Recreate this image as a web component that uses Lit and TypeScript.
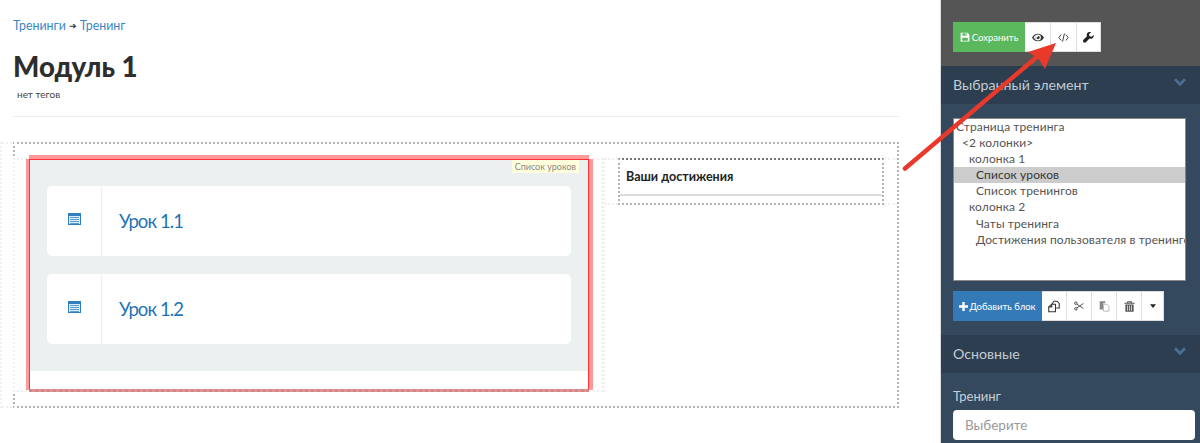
import { LitElement, html, css, svg } from "lit";
import { customElement } from "lit/decorators.js";

const ic = (w: number, h: number, body: unknown, vb = "0 0 16 16") =>
  html`<svg width=${w} height=${h} viewBox=${vb} aria-hidden="true">${body}</svg>`;

const icons = {
  save: ic(10, 10, svg`<path fill="#fff" fill-rule="evenodd" d="M1 1h11l3 3v11H1zM4 2v4h7V2zM8.500 2.800h1.500v2.400H8.500zM3.500 9v5h9V9z"/>`),
  eye: ic(12, 9, svg`<path fill="#333" fill-rule="evenodd" d="M0 5C3 -1 11 -1 14 5 11 11 3 11 0 5zM7 1.600A3.400 3.400 0 1 0 7 8.400 3.400 3.400 0 0 0 7 1.600zM1.800 5C3 6.800 4 7.600 4.800 8 3.400 6.200 3.400 3.800 4.800 2 4 2.400 3 3.200 1.800 5zM7 3a2 2 0 1 1-2 2c.8.500 2.200-.6 2-2z"/>`, "0 0 14 10"),
  code: ic(11, 9, svg`<path fill="none" stroke="#444" stroke-width="1" d="M3.200 1.500 .8 4.500l2.400 3M7.800 1.500l2.400 3-2.400 3M6.400 .5 4.600 8.500"/>`, "0 0 11 9"),
  wrench: ic(11, 11, svg`<path fill="#222" d="M15.500 4.200 12.700 7 9.500 6.200 8.800 3.300 11.700.5C9.300-.4 6.900.4 5.900 2.300 5.200 3.600 5.300 5 5.800 6.200L.7 11.300c-.9.900-.9 2.500 0 3.500.9.900 2.500.9 3.500 0l5.200-5.200c1.200.5 2.600.5 3.800-.1 2-1 2.900-3.400 2.300-5.300z"/>`),
  clone: ic(12, 13, svg`<g fill="none" stroke="#333" stroke-width="1.400"><path d="M5 5 8 1h4l3 3v6h-4"/><path d="M1 8.500 5 5h5v10H1z" fill="#fff"/><path d="M5 5v3.500H1"/></g>`),
  scissors: ic(12, 10, svg`<g fill="none" stroke="#555" stroke-width="1.600"><circle cx="3" cy="3.500" r="2"/><circle cx="3" cy="12.500" r="2"/><path d="M4.500 5 15 12M4.500 11 15 4"/></g>`),
  paste: ic(11, 12, svg`<path fill="#888" d="M1 1h8v3H6v9H1z"/><path fill="#fff" stroke="#aaa" stroke-width="1.200" d="M6.500 5.500h5l3 3v7h-8z"/>`),
  trash: ic(11, 13, svg`<path fill="#555" fill-rule="evenodd" d="M5 .5h6l1 2h3.500v1.500H.5V2.500H4zM6 2.500h4L9.700 1.700H6.300zM2 5h12v10.500H2zM4.500 6.500v7.500h1V6.500zM7.500 6.500v7.500h1V6.500zM10.500 6.500v7.500h1V6.500z"/>`),
  caret: ic(6, 4, svg`<path fill="#222" d="M0 0h8L4 5z"/>`, "0 0 8 5"),
  plus: ic(9, 9, svg`<path fill="#fff" d="M3.300 0h2.400v3.300H9v2.400H5.700V9H3.300V5.700H0V3.300h3.300z"/>`, "0 0 9 9"),
  chevron: ic(12, 8, svg`<path fill="none" stroke="#4a6d94" stroke-width="3" d="M1 1.200l5 5 5-5"/>`, "0 0 12 8"),
  list: ic(13, 12, svg`<rect x=".5" y=".5" width="12" height="11" fill="#dcebf7" stroke="#2f7fc0"/><path fill="#2f7fc0" d="M1 1h11v2H1z"/><path stroke="#5d9ed2" d="M2 4.500h9M2 6.500h9M2 8.500h9M2 10.500h9"/>`, "0 0 13 12"),
};

@customElement("app-root")
export class AppRoot extends LitElement {
  static styles = css`
    :host { display: flex; width: 1200px; height: 443px; overflow: hidden; position: relative; background: #fff;
      font-family: Lato, "Noto Sans", sans-serif; color: #333; }
    a { color: #3a87c2; text-decoration: none; }
    .main { width: 940px; flex: none; padding: 18px 41px 0 13px; box-sizing: border-box; }
    .crumbs { font-size: 12.400px; line-height: 16px; display: flex; align-items: center; gap: 3px; }
    .sep { font-size: 9px; }
    h1 { margin: 16px 0 0; font-size: 27.700px; line-height: 34px; font-weight: 900; color: #2e2e2e; }
    .tags { font-size: 10px; line-height: 12px; margin: 4px 0 0 4px; color: #444; }
    .rule { height: 1px; background: #eee; margin-top: 16px; }
    .canvas { margin-top: 25px; height: 266px; box-sizing: border-box; border: 2px dotted #b4b4b4; }
    .columns { display: flex; height: 266px; margin: -2px 0 0 -15px; }
    .col1 { width: 603px; flex: none; box-sizing: border-box; border-left: 2px dotted #f0f0f0; padding-left: 11px;
      background:
        repeating-linear-gradient(90deg, #f0f0f0 0 2px, transparent 2px 4px) 0 0 / 13px 2px no-repeat,
        repeating-linear-gradient(90deg, #f0f0f0 0 2px, transparent 2px 4px) 0 100% / 13px 2px no-repeat; }
    .col1-inner { margin-top: 16px; height: 234px; border: 2px dotted #f0f0f0; padding-left: 14px; box-sizing: border-box; }
    .col2 { flex: 1; padding-top: 16px; }
    .col2-inner { height: 234px; border-left: 2px dotted #f0f0f0; box-sizing: border-box; }
    .ach-wrap { height: 47px; box-sizing: border-box; border: 2px dotted #f0f0f0; border-width: 2px 0; padding-left: 13px; }
    .lessons { width: 560px; height: 231px; box-sizing: border-box; position: relative; margin-top: -1px;
      border: 1px solid #f33; box-shadow: -3px 0 0 #ff9999, 4px 0 0 #ff9999, 0 -4px 0 #ff9999; background: #fff; }
    .lessons::after { content: ""; position: absolute; left: -1px; right: -1px; top: 100%; height: 3px;
      background: repeating-linear-gradient(90deg, #c98a8a 0 3px, #e59090 3px 6px); }
    .lessons-bg { background: #ecf0f1; height: 211px; padding: 26px 17px 0 17px; box-sizing: border-box; display: flex; flex-direction: column; gap: 18px; }
    .tag { position: absolute; top: 0; right: 9px; background: #ffffdd; color: #888; font-size: 9px; line-height: 13px; padding: 0 3px; }
    .card { height: 70px; background: #fff; border-radius: 5px; display: flex; align-items: stretch; flex: none; }
    .card-icon { width: 55px; flex: none; border-right: 1px solid #eef1f2; display: flex; align-items: center; justify-content: center; padding: 0 0 5px 1px; box-sizing: border-box; }
    .card-title { display: flex; align-items: center; padding-left: 17px; font-size: 18.500px; letter-spacing: -0.9px; color: #1f73b4; }
    .ach { width: 266px; height: 47px; margin-top: -2px; box-sizing: border-box; border: 2px dotted #b4b4b4; border-top-color: #777; background: #fff; }
    .ach-title { height: 34px; border-bottom: 2px solid #ddd; padding-left: 6px; font-size: 12.500px; font-weight: 700; line-height: 34px; color: #222; }
    .side { width: 260px; flex: none; background: #34495e; border-left: 1px solid #ddd; box-sizing: border-box; color: #cfd6dc; }
    .top { height: 66px; background: #555; padding: 22px 0 0 12px; box-sizing: border-box; }
    .group { display: flex; height: 30px; }
    .btn { background: #fff; border: 1px solid #ddd; border-left-width: 0; display: flex; align-items: center; justify-content: center; box-sizing: border-box; height: 30px; }
    .btn.w26 { width: 26px; } .btn.w24 { width: 24px; } .btn.w25 { width: 25px; } .btn.w22 { width: 22px; }
    .primary { color: #fff; font-size: 9.500px; gap: 2px; border: 0; }
    .blue { background: #337ab7; width: 89px; gap: 1px; }
    .green { background: #5cb85c; width: 72px; }
    .head { height: 38px; background: #2c3e50; display: flex; align-items: center; justify-content: space-between; padding: 0 14px 2px 12px; box-sizing: border-box; font-size: 14.200px; color: #c3ccd3; }
    .head svg { margin-top: -4px; }
    .tree { margin: 14px 0 0 12px; width: 233px; height: 163px; background: #fff; border: 1px solid #888; box-sizing: border-box; overflow: hidden; color: #555; font-size: 12px; letter-spacing: 0.1px; }
    .row { height: 16.100px; line-height: 15px; white-space: nowrap; overflow: hidden; }
    .row.sel { background: #ccc; color: #333; }
    .i0 { padding-left: 2px; } .i1 { padding-left: 8px; } .i2 { padding-left: 15px; } .i3 { padding-left: 22px; }
    .tools { margin: 10px 0 0 12px; }
    .second { margin-top: 14px; }
    .field { padding: 15px 0 0 12px; }
    .label { font-size: 13px; line-height: 16px; color: #c8d0d6; }
    .input { margin-top: 6px; width: 242px; height: 30px; background: #fff; border-radius: 4px; padding: 0 12px; box-sizing: border-box; color: #999; font-size: 13.500px; line-height: 30px; }
    .arrow { position: absolute; left: 0; top: 0; pointer-events: none; }
  `;

  render() {
    const tree: [string, number, boolean?][] = [
      ["Страница тренинга", 0], ["<2 колонки>", 1], ["колонка 1", 2], ["Список уроков", 3, true],
      ["Список тренингов", 3], ["колонка 2", 2], ["Чаты тренинга", 3], ["Достижения пользователя в тренинге", 3],
    ];
    return html`
      <div class="main">
        <div class="crumbs"><a href="#">Тренинги</a><span class="sep">➔</span><a href="#">Тренинг</a></div>
        <h1>Модуль 1</h1>
        <div class="tags">нет тегов</div>
        <div class="rule"></div>
        <div class="canvas">
          <div class="columns">
            <div class="col1">
              <div class="col1-inner">
                <div class="lessons">
                  <div class="lessons-bg">
                    ${["Урок 1.1", "Урок 1.2"].map((t) => html`
                      <div class="card"><div class="card-icon">${icons.list}</div><a class="card-title" href="#">${t}</a></div>`)}
                  </div>
                  <div class="tag">Список уроков</div>
                </div>
              </div>
            </div>
            <div class="col2">
              <div class="col2-inner">
                <div class="ach-wrap"><div class="ach"><div class="ach-title">Ваши достижения</div></div></div>
              </div>
            </div>
          </div>
        </div>
      </div>
      <div class="side">
        <div class="top">
          <div class="group">
            <div class="btn primary green">${icons.save}<span>Сохранить</span></div>
            <div class="btn w26">${icons.eye}</div>
            <div class="btn w26">${icons.code}</div>
            <div class="btn w24">${icons.wrench}</div>
          </div>
        </div>
        <div class="head"><span>Выбранный элемент</span>${icons.chevron}</div>
        <div class="tree">
          ${tree.map(([t, i, s]) => html`<div class="row i${i} ${s ? "sel" : ""}">${t}</div>`)}
        </div>
        <div class="group tools">
          <div class="btn primary blue">${icons.plus}<span>Добавить блок</span></div>
          <div class="btn w25">${icons.clone}</div>
          <div class="btn w25">${icons.scissors}</div>
          <div class="btn w25">${icons.paste}</div>
          <div class="btn w25">${icons.trash}</div>
          <div class="btn w22">${icons.caret}</div>
        </div>
        <div class="head second"><span>Основные</span>${icons.chevron}</div>
        <div class="field">
          <div class="label">Тренинг</div>
          <div class="input">Выберите</div>
        </div>
      </div>
      <svg class="arrow" width="1200" height="443" viewBox="0 0 1200 443" aria-hidden="true">
        <path d="M905 168.500 1038 56" stroke="#e8392b" stroke-width="4.500" stroke-linecap="round" fill="none"/>
        <path d="M1056 43 1028 52 1038 58 1045 69z" fill="#e8392b"/>
      </svg>
    `;
  }
}
